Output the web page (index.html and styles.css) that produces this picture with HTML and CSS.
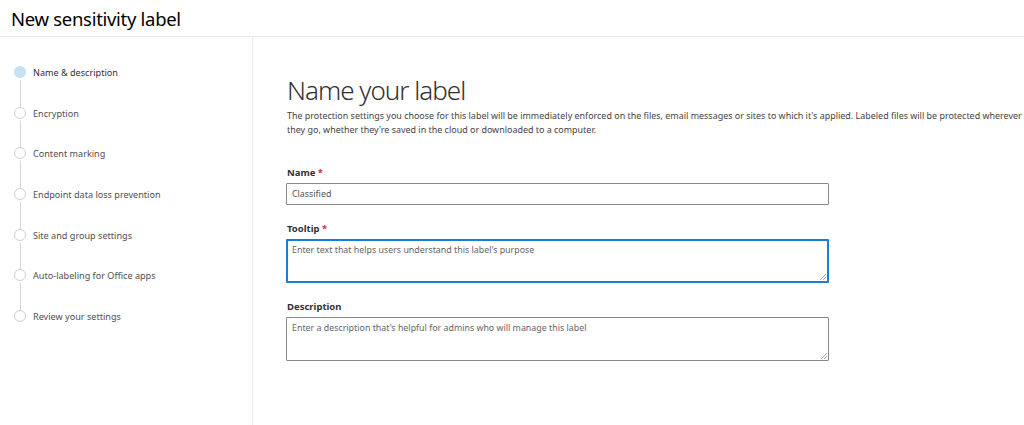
FILE: index.html
```html
<!DOCTYPE html>
<html lang="en">
<head>
<meta charset="utf-8">
<title>New sensitivity label</title>
<link rel="stylesheet" href="styles.css">
</head>
<body>
<header class="top-bar">
  <h1 class="page-title">New sensitivity label</h1>
</header>
<div class="layout">
  <nav class="steps">
    <div class="step step-current"><span class="dot"></span><span class="step-label">Name &amp; description</span></div>
    <div class="step"><span class="dot"></span><span class="step-label">Encryption</span></div>
    <div class="step"><span class="dot"></span><span class="step-label">Content marking</span></div>
    <div class="step"><span class="dot"></span><span class="step-label">Endpoint data loss prevention</span></div>
    <div class="step"><span class="dot"></span><span class="step-label">Site and group settings</span></div>
    <div class="step"><span class="dot"></span><span class="step-label">Auto-labeling for Office apps</span></div>
    <div class="step step-last"><span class="dot"></span><span class="step-label">Review your settings</span></div>
  </nav>
  <main class="content">
    <h2 class="heading">Name your label</h2>
    <p class="intro">The protection settings you choose for this label will be immediately enforced on the files, email messages or sites to which it's applied. Labeled files will be protected wherever they go, whether they're saved in the cloud or downloaded to a computer.</p>
    <div class="field field-first">
      <label class="field-label">Name <span class="req">*</span></label>
      <div class="input">Classified</div>
    </div>
    <div class="field">
      <label class="field-label">Tooltip <span class="req">*</span></label>
      <div class="textarea textarea-focus"><span class="placeholder">Enter text that helps users understand this label's purpose</span><span class="grip"></span></div>
    </div>
    <div class="field">
      <label class="field-label">Description</label>
      <div class="textarea"><span class="placeholder">Enter a description that's helpful for admins who will manage this label</span><span class="grip"></span></div>
    </div>
  </main>
</div>
</body>
</html>
```

FILE: styles.css
```css
* { box-sizing: border-box; }
html, body { margin: 0; padding: 0; background: #fff; }
body {
  font-family: "Noto Sans", "Open Sans", sans-serif;
  color: #323130;
  width: 1024px;
  height: 425px;
  overflow: hidden;
}
.top-bar {
  height: 37px;
  border-bottom: 1px solid #e6e6e6;
  padding-left: 11px;
  display: flex;
  align-items: center;
}
.page-title {
  margin: 0;
  font-size: 18.5px;
  font-weight: 400;
  color: #000;
  letter-spacing: -0.3px;
}
.layout {
  display: flex;
  height: 388px;
}
.steps {
  width: 253px;
  border-right: 1px solid #ececec;
  padding-top: 29px;
  flex: none;
}
.step {
  position: relative;
  height: 40.7px;
  display: flex;
  align-items: flex-start;
  padding-left: 14px;
}
.step::after {
  content: "";
  position: absolute;
  left: 19.5px;
  top: 14px;
  height: 27px;
  width: 1px;
  background: #d6d6d6;
}
.step-last::after { display: none; }
.dot {
  width: 12px;
  height: 12px;
  border-radius: 50%;
  border: 1px solid #cfcfcf;
  background: #fff;
  flex: none;
}
.step-current .dot {
  background: #c7e0f4;
  border-color: #c7e0f4;
}
.step-label {
  margin-left: 7px;
  margin-top: 1px;
  font-size: 9.1px;
  line-height: 12px;
  color: #505050;
}
.step-current .step-label { color: #323130; }
.content {
  padding-left: 34px;
  padding-top: 36px;
  flex: 1;
}
.heading {
  margin: 0;
  font-size: 26px;
  font-weight: 300;
  line-height: 34px;
  color: #323130;
  letter-spacing: -1px;
}
.intro {
  margin: 2px 0 0;
  font-size: 8.95px;
  line-height: 14px;
  color: #444;
  max-width: 735px;
}
.field { margin-top: 17px; }
.field-first { margin-top: 29px; }
.field-label {
  display: block;
  font-size: 9.5px;
  font-weight: 700;
  line-height: 14px;
  color: #323130;
  margin-bottom: 3px;
}
.req { color: #c4314b; }
.input {
  width: 543px;
  height: 22px;
  margin-left: -1px;
  border: 1px solid #8a8886;
  border-radius: 1px;
  font-size: 8.85px;
  line-height: 20px;
  padding-left: 5px;
  color: #555;
}
.textarea {
  position: relative;
  width: 543px;
  height: 44px;
  margin-left: -1px;
  border: 1px solid #8a8886;
  border-radius: 1px;
  padding: 3px 5px;
  font-size: 8.85px;
  line-height: 14px;
}
.textarea-focus {
  border: 2px solid #1a7ed6;
  padding: 2px 4px;
}
.placeholder { color: #666; }
.grip {
  position: absolute;
  right: 1px;
  bottom: 1px;
  width: 6px;
  height: 6px;
  background: linear-gradient(135deg, transparent 45%, #aaa 45%, #aaa 55%, transparent 55%, transparent 70%, #aaa 70%, #aaa 80%, transparent 80%);
}
```
